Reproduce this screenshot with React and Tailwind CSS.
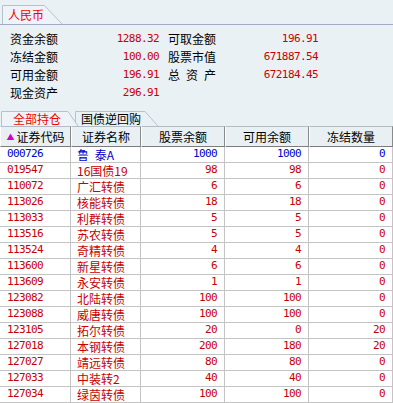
import React from 'react';

const CJK = "font-['Noto_Sans_CJK_SC','Noto_Sans',sans-serif]";
const NUM = "font-['DejaVu_Sans_Mono','Liberation_Mono',monospace] text-[11px] tracking-[-0.6px]";

const rows = [
    ['000726', '鲁 泰A', 1000, 1000, 0, true],
    ['019547', '16国债19', 98, 98, 0],
    ['110072', '广汇转债', 6, 6, 0],
    ['113026', '核能转债', 18, 18, 0],
    ['113033', '利群转债', 5, 5, 0],
    ['113516', '苏农转债', 5, 5, 0],
    ['113524', '奇精转债', 4, 4, 0],
    ['113600', '新星转债', 6, 6, 0],
    ['113609', '永安转债', 1, 1, 0],
    ['123082', '北陆转债', 100, 100, 0],
    ['123088', '威唐转债', 100, 100, 0],
    ['123105', '拓尔转债', 20, 0, 20],
    ['127018', '本钢转债', 200, 180, 20],
    ['127027', '靖远转债', 80, 80, 0],
    ['127033', '中装转2', 40, 40, 0],
    ['127034', '绿茵转债', 100, 100, 0],
];

const InfoRow = ({ label, value, label2, value2 }) => (
    <div className="flex items-center h-[18px] pl-[10px]">
        <span className={`w-[48px] text-[12px] leading-[12px] text-black ${CJK}`}>{label}</span>
        <span className={`w-[101px] text-right text-[#c80000] ${NUM}`}>{value}</span>
        {label2 && (
            <span className={`ml-[9px] w-[48px] flex justify-between text-[12px] leading-[12px] text-black ${CJK}`}>
                {label2.split('').map((c, i) => <span key={i}>{c}</span>)}
            </span>
        )}
        {value2 && <span className={`w-[102px] text-right text-[#c80000] ${NUM}`}>{value2}</span>}
    </div>
);

const headers = ['证券代码', '证券名称', '股票余额', '可用余额', '冻结数量'];

export default function App() {
    return (
        <div className={`w-[393px] h-[403px] overflow-hidden bg-[#eaf1f5] ${CJK}`}>
            {/* currency tab */}
            <div className="h-[25px] pt-[5px] pl-[2px] border-b border-[#a3abc6]">
                <div className="relative w-[60px] h-[19px]">
                    <svg className="absolute inset-0" width="60" height="19">
                        <path d="M0.5 19 V0.5 H42.5 L60 19" fill="#eef3f7" stroke="#b9c1cc" />
                    </svg>
                    <span className="relative block pl-[6px] text-[12px] leading-[19px] text-[#f00000]">人民币</span>
                </div>
            </div>

            {/* balances */}
            <div className="pt-[5px]">
                <InfoRow label="资金余额" value="1288.32" label2="可取金额" value2="196.91" />
                <InfoRow label="冻结金额" value="100.00" label2="股票市值" value2="671887.54" />
                <InfoRow label="可用金额" value="196.91" label2="总资产" value2="672184.45" />
                <InfoRow label="现金资产" value="296.91" />
            </div>

            {/* holdings tabs */}
            <div className="relative mt-[9px] h-[15px] pl-[1px] flex">
                <svg className="absolute inset-0" width="393" height="15">
                    <path d="M75.5 15 V0.5 H145 L158 15" fill="#eaf1f5" stroke="#b9c1cc" />
                    <path d="M1.5 15 V0.5 H68 L78 15" fill="#eef3f7" stroke="#b9c1cc" />
                </svg>
                <span className="relative w-[76px] pl-[12px] text-[12px] leading-[15px] text-[#f00000]">全部持仓</span>
                <span className="relative pl-[4px] text-[12px] leading-[15px] text-black">国债逆回购</span>
            </div>

            {/* table */}
            <div className="grid grid-cols-[71px_70px_84px_84px_84px]">
                {headers.map((h, i) => (
                    <div
                        key={h}
                        className="h-[21px] flex items-center justify-center bg-[#e9f0f4] border-t border-t-[#b4bcc8] border-b border-b-[#7c7c7c] border-r border-r-[#8a8a8a] border-l border-l-white text-[12px] text-black"
                    >
                        {i === 0 && <span className="text-[8px] text-[#d000d0] mr-[2px] leading-none">▲</span>}
                        {h}
                    </div>
                ))}
                {rows.map(([code, name, bal, avail, frozen, blue]) => {
                    const color = blue ? 'text-[#0000c8]' : 'text-[#c80000]';
                    const cell = `h-[16px] bg-white border-b border-r border-[#c4c4c4] flex items-center ${color}`;
                    return (
                        <React.Fragment key={code}>
                            <div className={`${cell} pl-[7px] ${NUM}`}>{code}</div>
                            <div className={`${cell} pl-[6px] text-[12px] [word-spacing:3px]`}>{name}</div>
                            <div className={`${cell} justify-end pr-[7px] ${NUM}`}>{bal}</div>
                            <div className={`${cell} justify-end pr-[7px] ${NUM}`}>{avail}</div>
                            <div className={`${cell} justify-end pr-[7px] ${NUM}`}>{frozen}</div>
                        </React.Fragment>
                    );
                })}
            </div>
        </div>
    );
}
